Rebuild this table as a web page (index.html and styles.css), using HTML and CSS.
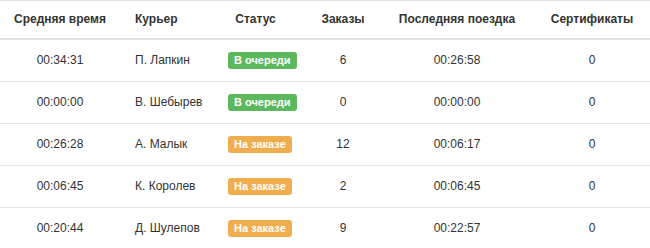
FILE: index.html
```html
<!DOCTYPE html>
<html lang="ru">
<head>
<meta charset="utf-8">
<title>Курьеры</title>
<link rel="stylesheet" href="styles.css">
</head>
<body>
<table class="couriers">
  <colgroup>
    <col class="c1"><col class="c2"><col class="c3"><col class="c4"><col class="c5"><col class="c6">
  </colgroup>
  <thead>
    <tr>
      <th class="center">Средняя время</th>
      <th class="left">Курьер</th>
      <th class="center">Статус</th>
      <th class="center">Заказы</th>
      <th class="center">Последняя поездка</th>
      <th class="center">Сертификаты</th>
    </tr>
  </thead>
  <tbody>
    <tr>
      <td class="center">00:34:31</td>
      <td class="left">П. Лапкин</td>
      <td class="status"><span class="label label-success">В очереди</span></td>
      <td class="center">6</td>
      <td class="center">00:26:58</td>
      <td class="center">0</td>
    </tr>
    <tr>
      <td class="center">00:00:00</td>
      <td class="left">В. Шебырев</td>
      <td class="status"><span class="label label-success">В очереди</span></td>
      <td class="center">0</td>
      <td class="center">00:00:00</td>
      <td class="center">0</td>
    </tr>
    <tr>
      <td class="center">00:26:28</td>
      <td class="left">А. Малык</td>
      <td class="status"><span class="label label-warning">На заказе</span></td>
      <td class="center">12</td>
      <td class="center">00:06:17</td>
      <td class="center">0</td>
    </tr>
    <tr>
      <td class="center">00:06:45</td>
      <td class="left">К. Королев</td>
      <td class="status"><span class="label label-warning">На заказе</span></td>
      <td class="center">2</td>
      <td class="center">00:06:45</td>
      <td class="center">0</td>
    </tr>
    <tr>
      <td class="center">00:20:44</td>
      <td class="left">Д. Шулепов</td>
      <td class="status"><span class="label label-warning">На заказе</span></td>
      <td class="center">9</td>
      <td class="center">00:22:57</td>
      <td class="center">0</td>
    </tr>
  </tbody>
</table>
</body>
</html>
```
FILE: styles.css
```css
html, body {
  margin: 0;
  padding: 0;
  overflow: hidden;
  background: #fff;
}
body {
  font-family: "Liberation Sans", Arial, Helvetica, sans-serif;
  font-size: 12px;
  color: #333;
}
.couriers {
  border-collapse: collapse;
  table-layout: fixed;
  width: 665px;
}
.c1 { width: 120px; }
.c2 { width: 100px; }
.c3 { width: 71px; }
.c4 { width: 104px; }
.c5 { width: 124px; }
.c6 { width: 146px; }
.couriers th {
  font-weight: bold;
  line-height: 17px;
  height: 17px;
  padding: 10px 0;
  border-top: 1px solid #e2e2e2;
  border-bottom: 2px solid #e2e2e2;
  white-space: nowrap;
}
.couriers td {
  line-height: 17px;
  height: 17px;
  padding: 12px 0;
  border-top: 1px solid #e5e5e5;
  white-space: nowrap;
  vertical-align: middle;
}
.couriers tbody tr:first-child td {
  border-top: 0;
}
.center { text-align: center; }
.left { text-align: left; padding-left: 15px !important; }
.status { text-align: left; padding-left: 8px !important; }
.label {
  display: inline-block;
  font-size: 11px;
  font-weight: bold;
  line-height: 11px;
  color: #fff;
  padding: 3px 6px 3px;
  border-radius: 3px;
  vertical-align: top;
}
.label-success { background: #5cb85c; }
.label-warning { background: #f0ad4e; }
```
